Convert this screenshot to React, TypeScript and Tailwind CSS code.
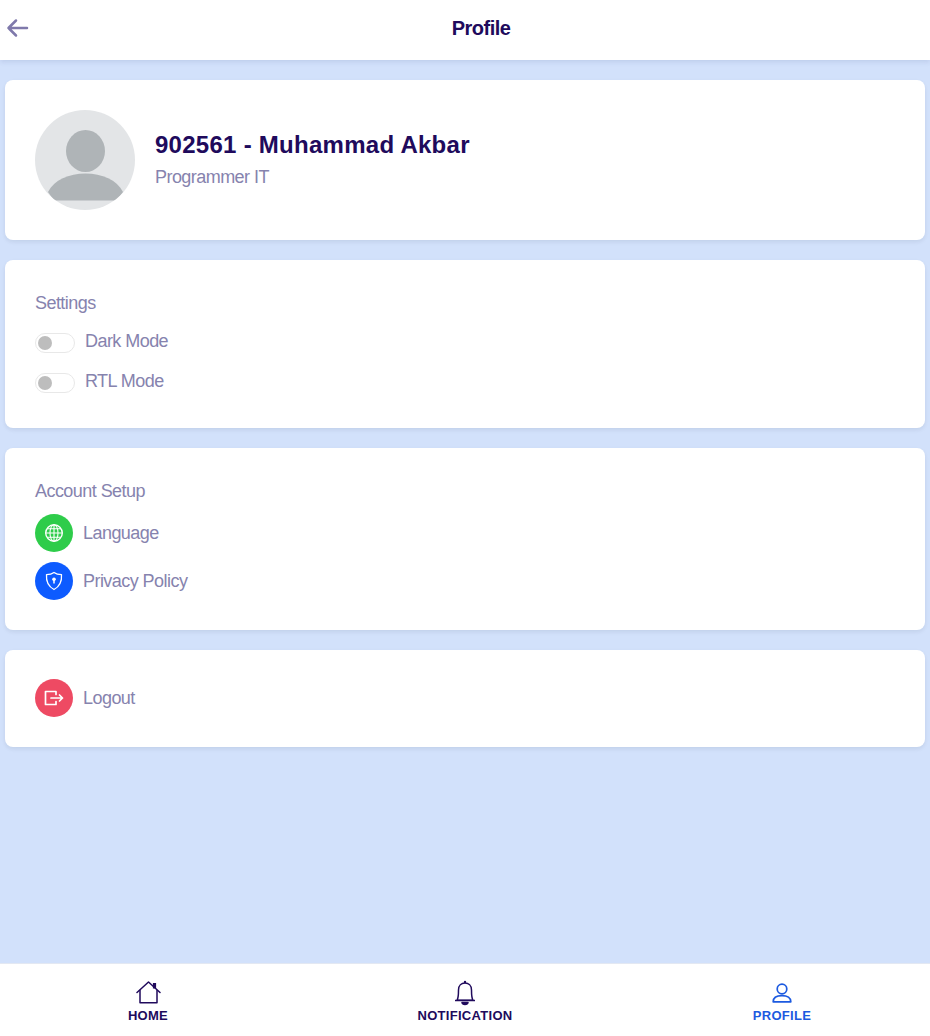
import React, { useState } from "react";

const Toggle = ({ label }: { label: string }) => {
  const [on, setOn] = useState(false);
  return (
    <div className="flex items-center h-[20px]">
      <button
        type="button"
        onClick={() => setOn(!on)}
        className="w-[40px] h-[20px] rounded-full border border-[#e8e8e8] bg-white flex items-center px-[2px] shrink-0"
      >
        <span className={`w-[14px] h-[14px] rounded-full bg-[#bdbdbd] ${on ? "ml-[20px]" : ""}`} />
      </button>
      <span className="ml-[10px] text-[18px] leading-[16px] pb-[4px] tracking-[-0.55px] text-[#8683ae]">{label}</span>
    </div>
  );
};

const MenuRow = ({ color, icon, label }: { color: string; icon: React.ReactNode; label: string }) => (
  <div className="flex items-center">
    <div className={`w-[38px] h-[38px] rounded-full flex items-center justify-center text-white ${color}`}>{icon}</div>
    <span className="ml-[10px] text-[18px] leading-[20px] tracking-[-0.55px] text-[#8683ae]">{label}</span>
  </div>
);

const Card = ({ className, children }: { className: string; children: React.ReactNode }) => (
  <div className={`bg-white rounded-[8px] px-[30px] shadow-[0_2px_4px_rgba(15,23,42,0.08)] ${className}`}>{children}</div>
);

const NavItem = ({ label, active, icon }: { label: string; active?: boolean; icon: React.ReactNode }) => (
  <div className={`flex flex-col items-center ${active ? "text-[#1c5ae0]" : "text-[#200a5c]"}`}>
    <div className="h-[27px] flex items-center justify-center">{icon}</div>
    <span className="text-[13px] font-bold leading-[15px] mt-[2px] tracking-[0.3px]">{label}</span>
  </div>
);

export default function App() {
  return (
    <div className="min-h-screen flex flex-col bg-[#d2e1fb] font-['Liberation_Sans',Arial,sans-serif]">
      <header className="relative h-[60px] bg-white flex items-center justify-center shadow-[0_2px_5px_rgba(40,60,120,0.12)]">
        <svg
          className="absolute left-[6px] top-[18px] text-[#7f79ab]"
          width="23"
          height="20"
          viewBox="0 0 23 20"
          fill="none"
          stroke="currentColor"
          strokeWidth="2.5"
          strokeLinecap="round"
          strokeLinejoin="round"
        >
          <path d="M2.5 10 H21 M10 2.5 L2.5 10 L10 17.5" />
        </svg>
        <h1 className="text-[20px] leading-[24px] pb-[4px] font-bold tracking-[-0.5px] text-[#200a5c] relative left-[16px]">Profile</h1>
      </header>

      <main className="flex-1 px-[5px] pt-[20px] flex flex-col gap-[20px]">
        <Card className="h-[160px] flex items-center">
          <div className="w-[100px] h-[100px] rounded-full bg-[#e3e5e7] overflow-hidden shrink-0">
            <svg viewBox="0 0 100 100" width="100" height="100">
              <ellipse cx="50.5" cy="41" rx="19.5" ry="21" fill="#afb4b7" />
              <path d="M13 82 C19 70 34 63.5 50.5 63.5 C67 63.5 82 70 88 82 L82 90.5 L19 90.5 Z" fill="#afb4b7" />
            </svg>
          </div>
          <div className="ml-[20px] pb-[2px]">
            <div className="text-[24px] font-bold leading-[30px] tracking-[0.27px] text-[#200a5c]">902561 - Muhammad Akbar</div>
            <div className="text-[18px] leading-[24px] mt-[5px] tracking-[-0.55px] text-[#8683ae]">Programmer IT</div>
          </div>
        </Card>

        <Card className="h-[168px] pt-[30px]">
          <div className="text-[18px] leading-[26px] tracking-[-0.55px] text-[#8683ae] mb-[17px]">Settings</div>
          <div className="flex flex-col gap-[20px]">
            <Toggle label="Dark Mode" />
            <Toggle label="RTL Mode" />
          </div>
        </Card>

        <Card className="h-[182px] pt-[30px]">
          <div className="text-[18px] leading-[26px] tracking-[-0.55px] text-[#8683ae] mb-[10px]">Account Setup</div>
          <div className="flex flex-col gap-[10px]">
            <MenuRow
              color="bg-[#2ecc4a]"
              label="Language"
              icon={
                <svg width="20" height="20" viewBox="0 0 20 20" fill="none" stroke="currentColor" strokeWidth="1.1">
                  <circle cx="10" cy="10" r="8.3" strokeWidth="1.4" />
                  <ellipse cx="10" cy="10" rx="4" ry="8.3" />
                  <path d="M10 1.7 V18.3 M1.7 10 H18.3 M3 5.8 H17 M3 14.2 H17" />
                </svg>
              }
            />
            <MenuRow
              color="bg-[#0d5bff]"
              label="Privacy Policy"
              icon={
                <svg width="20" height="20" viewBox="0 0 20 20" fill="none" stroke="currentColor" strokeWidth="1.3">
                  <path d="M10 1.5 C12 3 14.5 3.6 17.5 3.6 C18 10 15.5 15.5 10 18.5 C4.5 15.5 2 10 2.5 3.6 C5.5 3.6 8 3 10 1.5 Z" strokeLinejoin="round" />
                  <circle cx="10" cy="8.3" r="1.8" fill="currentColor" stroke="none" />
                  <path d="M10 9 V12.5" strokeWidth="1.5" />
                </svg>
              }
            />
          </div>
        </Card>

        <Card className="h-[97px] flex items-center pb-[2px]">
          <MenuRow
            color="bg-[#ee4a63]"
            label="Logout"
            icon={
              <svg width="20" height="16" viewBox="0 0 20 16" fill="none" stroke="currentColor" strokeWidth="1.7" strokeLinejoin="round" strokeLinecap="round">
                <path d="M12 4.5 V1.5 H1.5 V14.5 H12 V11.5" />
                <path d="M7 8 H18.5 M15.5 5 L18.5 8 L15.5 11" />
              </svg>
            }
          />
        </Card>
      </main>

      <nav className="h-[73px] mt-[20px] bg-white border-t border-[#e3e8f2] grid grid-cols-[296px_338px_296px] pt-[15px]">
        <NavItem
          label="HOME"
          icon={
            <svg width="25" height="23" viewBox="0 0 25 23" fill="none" stroke="currentColor" strokeWidth="1.5" strokeLinejoin="round" strokeLinecap="round">
              <path d="M1 11.5 L12.5 1 L24 11.5" />
              <path d="M4 9.5 V21.8 H21 V9.5" />
              <path d="M18.5 2 V7.5" strokeWidth="3.2" strokeLinecap="butt" />
            </svg>
          }
        />
        <NavItem
          label="NOTIFICATION"
          icon={
            <svg width="22" height="26" viewBox="0 0 22 26" fill="none" stroke="currentColor" strokeWidth="1.5" strokeLinejoin="round">
              <path d="M3 20.3 C4.5 18 4.5 14 4.5 10 C4.5 5.5 7.5 3 11 3 C14.5 3 17.5 5.5 17.5 10 C17.5 14 17.5 18 19 20.3 Z" />
              <path d="M1 20.5 H21" />
              <path d="M8 22.5 H14 C13.5 25 8.5 25 8 22.5 Z" fill="currentColor" />
              <circle cx="11" cy="2" r="1.2" fill="currentColor" stroke="none" />
            </svg>
          }
        />
        <NavItem
          active
          label="PROFILE"
          icon={
            <svg width="20" height="20" viewBox="0 0 20 20" fill="none" stroke="currentColor" strokeWidth="1.7" strokeLinejoin="round">
              <circle cx="10" cy="6" r="4.8" />
              <path d="M1.2 18.8 C1.2 15 4.5 12.6 10 12.6 C15.5 12.6 18.8 15 18.8 18.8 Z" />
            </svg>
          }
        />
      </nav>
    </div>
  );
}
